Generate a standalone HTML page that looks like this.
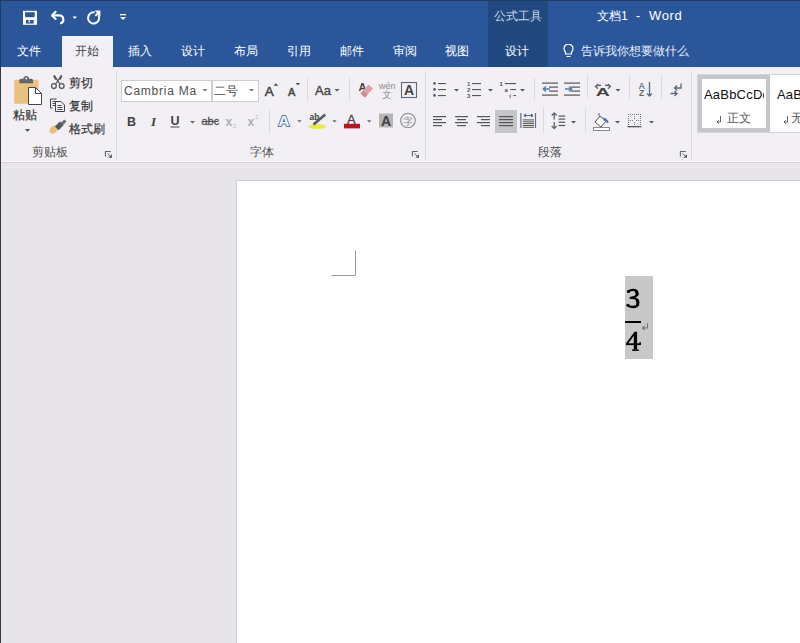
<!DOCTYPE html>
<html><head><meta charset="utf-8">
<style>
*{margin:0;padding:0;box-sizing:border-box}
html,body{width:800px;height:643px;overflow:hidden;background:#E7E4EA;font-family:"Liberation Sans",sans-serif}
.a{position:absolute}
#title{left:0;top:0;width:800px;height:67px;background:#2B579A}
#ctx{left:488px;top:0;width:60px;height:67px;background:#22497F}
.tab{position:absolute;top:43px;color:#fff;font-size:12px;line-height:16px;white-space:nowrap}
#ribbon{left:0;top:67px;width:800px;height:96px;background:#F3F0F5;border-bottom:1px solid #D6D2D8}
.t{position:absolute;color:#333;font-size:12px;line-height:14px;white-space:nowrap;-webkit-text-stroke:0.2px #333}
.gl{position:absolute;color:#505050;font-size:12px;line-height:14px;white-space:nowrap;margin-top:0.5px}
.sep{position:absolute;width:1px;background:#DADADA}
#page{left:236px;top:180px;width:564px;height:463px;background:#fff;border-left:1px solid #D0D0D0;border-top:1px solid #D0D0D0}
</style></head><body>
<div id="title" class="a"></div>
<div id="ctx" class="a"></div>
<div class="a" style="left:62px;top:36px;width:51px;height:31px;background:#F3F0F5"></div>
<!-- QAT -->
<svg class="a" style="left:0;top:0" width="140" height="36">
  <rect x="23" y="10.8" width="14" height="14" fill="#fff"/>
  <path d="M25 12.2 h9.8 v3.6 q0 1.5 -1.5 1.5 h-6.8 q-1.5 0 -1.5 -1.5z" fill="#2B579A"/>
  <rect x="26" y="20" width="7.7" height="3.6" fill="#2B579A"/>
  <rect x="28.5" y="20.4" width="1.6" height="2" fill="#fff"/>
  <path d="M52.5 15.4 h6.5 a4.1 4.1 0 0 1 2 7.8" fill="none" stroke="#fff" stroke-width="2.1" stroke-linecap="round"/>
  <path d="M55.6 11.8 l-3.6 3.6 l3.6 3.6" fill="none" stroke="#fff" stroke-width="2.1" stroke-linecap="round" stroke-linejoin="round"/>
  <path d="M72.5 16.5h4.5l-2.25 2.5z" fill="#fff"/>
  <path d="M98.45 15.1 A5.6 5.6 0 1 1 94.57 12.4" fill="none" stroke="#fff" stroke-width="2"/>
  <path d="M94.6 10.6 L100.4 10.6 L100.4 16.4z" fill="#fff"/>
  <path d="M95.3 15.8 L98.5 12.6" stroke="#fff" stroke-width="1.8"/>
  <rect x="120" y="14" width="6" height="1.3" fill="#fff"/>
  <path d="M120 17h6l-3 3z" fill="#fff"/>
</svg>

<div class="a" style="left:494px;top:8px;color:#CBD8EA;font-size:12px;line-height:16px">公式工具</div>
<div class="a" style="left:597px;top:8px;color:#fff;font-size:12px;line-height:16px;white-space:nowrap">文档1</div>
<div class="a" style="left:636px;top:8px;color:#fff;font-size:12px;line-height:16px;white-space:nowrap">-</div>
<div class="a" style="left:649px;top:8px;color:#fff;font-size:13px;line-height:16px;letter-spacing:0.6px;white-space:nowrap">Word</div>
<div class="tab" style="left:17px">文件</div>
<div class="tab" style="left:75px;color:#444">开始</div>
<div class="tab" style="left:128px">插入</div>
<div class="tab" style="left:181px">设计</div>
<div class="tab" style="left:234px">布局</div>
<div class="tab" style="left:287px">引用</div>
<div class="tab" style="left:340px">邮件</div>
<div class="tab" style="left:393px">审阅</div>
<div class="tab" style="left:445px">视图</div>
<div class="tab" style="left:505px">设计</div>
<svg class="a" style="left:562px;top:44px" width="14" height="14"><path d="M3.5 8 a4.5 4.5 0 1 1 6 0 v2 h-6z M4.5 12.5h4" fill="none" stroke="#fff" stroke-width="1.2"/></svg>
<div class="tab" style="left:581px;color:#E8EEF6">告诉我你想要做什么</div>

<div id="ribbon" class="a"></div>

<!-- clipboard group -->
<svg class="a" style="left:10px;top:72px" width="40" height="62">
  <rect x="4.2" y="7.7" width="24.3" height="24.1" rx="1" fill="#E8C27E"/>
  <path d="M9.3 11.2 v-2.6 q0 -1.8 1.8 -1.8 h10.2 q1.8 0 1.8 1.8 v2.6z" fill="#666"/>
  <circle cx="16.2" cy="6.6" r="2.7" fill="#666"/><circle cx="16.2" cy="6.4" r="1" fill="#F3F0F5"/>
  <path d="M18.5 15.5 h7 l6 6 v11 h-13z" fill="#fff" stroke="#444" stroke-width="1"/>
  <path d="M25.5 15.5 v6 h6" fill="none" stroke="#444" stroke-width="1"/>
  <path d="M15 57h5l-2.5 3z" fill="#555"/>
</svg>
<div class="t" style="left:13px;top:108px;font-size:12px">粘贴</div>
<svg class="a" style="left:48px;top:72px" width="20" height="64">
  <g fill="none" stroke="#555">
    <circle cx="5.9" cy="14.1" r="2.4" stroke-width="1.3"/><circle cx="13.7" cy="14.1" r="2.4" stroke-width="1.3"/>
    <path d="M7.6 12 L13.6 3.3 M12 12 L6 3.3" stroke-width="1.3"/>
    <path d="M11.5 7.5 L13.6 3.6 M8 7.5 L6 3.6" stroke-width="2"/>
  </g>
  <g fill="none" stroke="#444" stroke-width="1">
    <path d="M8.5 27 h-6 v9 h2"/>
    <path d="M4.5 29.5 h3 M4.5 31.5 h3 M4.5 33.5 h3"/>
    <path d="M7.5 29.5 h5.5 l3.5 3.5 v6.5 h-9z" fill="#F2F0F4"/>
    <path d="M9.5 33.5 h4 M9.5 35.5 h5 M9.5 37.5 h5"/>
  </g>
  <ellipse cx="0" cy="0" rx="4.6" ry="3.4" fill="#E6C27A" transform="translate(5.6,57.6) rotate(-45)"/>
  <rect x="-3.5" y="-2.6" width="7" height="5.2" fill="#585858" transform="translate(11.2,53.9) rotate(-45)"/>
  <rect x="-2.6" y="-1.5" width="5.2" height="3" fill="#6A6A6A" transform="translate(15.6,50.3) rotate(-45)"/>
</svg>
<div class="t" style="left:69px;top:75.5px">剪切</div>
<div class="t" style="left:69px;top:98.5px">复制</div>
<div class="t" style="left:69px;top:121.5px">格式刷</div>
<div class="gl" style="left:32px;top:144px">剪贴板</div>
<svg class="a" style="left:104px;top:150px" width="10" height="10"><path d="M1.4 6.5 v-5 h5.4" fill="none" stroke="#666" stroke-width="1.1"/><path d="M3.6 3.4 l3.4 3.4" stroke="#555" stroke-width="1"/><path d="M8 4.2 v3.6 h-3.6z" fill="#555"/></svg>
<div class="sep" style="left:116px;top:71px;height:89px"></div>

<!-- font group -->
<div class="a" style="left:121px;top:80px;width:91px;height:22px;background:#fff;border:1px solid #CFCDD1"></div>
<div class="a" style="left:212px;top:80px;width:47px;height:22px;background:#fff;border:1px solid #CFCDD1"></div>
<div class="t" style="left:124px;top:83px;font-size:12px;line-height:16px;letter-spacing:0.75px;color:#505050;width:73px;overflow:hidden;-webkit-text-stroke:0">Cambria Math</div>
<div class="t" style="left:214px;top:83px;font-size:12px;line-height:16px;color:#444;-webkit-text-stroke:0">二号</div>
<svg class="a" style="left:0;top:0" width="430" height="140">
  <path d="M202.5 89h5l-2.5 2.5z M249 89h5l-2.5 2.5z" fill="#777"/>
  <!-- grow / shrink -->
  <text x="264.8" y="95.7" font-family="Liberation Sans" font-size="13.5" fill="#444" stroke="#444" stroke-width="0.5">A</text>
  <path d="M273.6 85.8 l2.3 -2.5 l2.3 2.5z" fill="#444"/>
  <text x="288" y="95.7" font-family="Liberation Sans" font-size="11" fill="#444" stroke="#444" stroke-width="0.5">A</text>
  <path d="M295.6 83h4.6l-2.3 2.3z" fill="#444"/>
  <!-- Aa -->
  <text x="315" y="94.5" font-family="Liberation Sans" font-size="13" fill="#444" stroke="#444" stroke-width="0.35">Aa</text>
  <path d="M334.5 89h5l-2.5 2.5z" fill="#555"/>
  <!-- clear formatting -->
  <text x="358.5" y="91" font-family="Liberation Sans" font-size="11" font-weight="bold" fill="#444">A</text>
  <path d="M360.5 93.5 l8 -9 l4.5 4 l-8 9z" fill="#E0A0A8"/><path d="M360.5 93.5 l2.5 -2.8 l4.5 4 l-2.5 2.8z" fill="#D08890"/>
  <!-- wen -->
  <text x="379" y="88.5" font-family="Liberation Sans" font-size="9" fill="#8A8A8A">wén</text>
  <text x="381.5" y="97.5" font-size="10" fill="#8A8A8A">文</text>
  <!-- border A -->
  <rect x="401.5" y="82.5" width="15" height="15" fill="none" stroke="#5C6B7A" stroke-width="1.1"/>
  <text x="404" y="95" font-family="Liberation Sans" font-size="14" font-weight="bold" fill="#444">A</text>
  <!-- row 2 -->
  <text x="127" y="125.5" font-family="Liberation Sans" font-size="12.5" font-weight="bold" fill="#444">B</text>
  <text x="151" y="125.5" font-family="Liberation Serif" font-size="13" font-style="italic" font-weight="bold" fill="#444">I</text>
  <text x="170.5" y="125" font-family="Liberation Sans" font-size="12.5" font-weight="bold" fill="#444">U</text>
  <rect x="170.5" y="126.5" width="9" height="1" fill="#444"/>
  <path d="M190 121h5l-2.5 2.5z" fill="#666"/>
  <text x="201.5" y="125" font-family="Liberation Sans" font-size="11" fill="#555" stroke="#555" stroke-width="0.3">abc</text>
  <rect x="201.5" y="121" width="17" height="1" fill="#555"/>
  <text x="225.5" y="125.5" font-family="Liberation Sans" font-size="12" font-weight="bold" fill="#B0B0B0">x</text>
  <text x="233" y="128" font-family="Liberation Sans" font-size="6" fill="#B8B8B8">2</text>
  <text x="247.5" y="125.5" font-family="Liberation Sans" font-size="12" font-weight="bold" fill="#B0B0B0">x</text>
  <text x="255" y="119" font-family="Liberation Sans" font-size="6" fill="#B8B8B8">2</text>
  <!-- text effects -->
  <text x="278.3" y="126.3" font-family="Liberation Sans" font-size="15.5" font-weight="bold" fill="#EEF4FA" stroke="#56789C" stroke-width="2" paint-order="stroke" stroke-linejoin="round">A</text>
  <path d="M297.3 120.3h4.4l-2.2 2.2z" fill="#666"/>
  <!-- highlight -->
  <ellipse cx="317.2" cy="126.5" rx="8.8" ry="2.6" fill="#E6EE3A"/>
  <text x="309.5" y="120" font-family="Liberation Sans" font-size="8.5" font-weight="bold" fill="#444">ab</text>
  <path d="M313.5 124.5 L325.3 114.5" stroke="#555B66" stroke-width="2.6"/>
  <path d="M332.3 120.3h4.4l-2.2 2.2z" fill="#666"/>
  <!-- font color -->
  <text x="347" y="124.3" font-family="Liberation Sans" font-size="13" fill="#444" stroke="#444" stroke-width="0.3">A</text>
  <rect x="344" y="123.8" width="16" height="4.6" fill="#C0141C"/>
  <path d="M367 120.3h4.4l-2.2 2.2z" fill="#666"/>
  <!-- shading -->
  <rect x="379" y="113.5" width="14" height="14" fill="#B6B6B6"/>
  <text x="381" y="126" font-family="Liberation Sans" font-size="14" font-weight="bold" fill="#404040">A</text>
  <!-- enclose char -->
  <circle cx="408" cy="120.5" r="7.3" fill="none" stroke="#8C8C8C" stroke-width="1.1"/>
  <text x="403" y="124.5" font-size="10" fill="#888">字</text>
</svg>
<div class="sep" style="left:307px;top:78px;height:23px"></div>
<div class="sep" style="left:349px;top:78px;height:23px"></div>
<div class="sep" style="left:269px;top:110px;height:24px"></div>
<div class="gl" style="left:250px;top:144px">字体</div>
<svg class="a" style="left:411px;top:150px" width="10" height="10"><path d="M1.4 6.5 v-5 h5.4" fill="none" stroke="#666" stroke-width="1.1"/><path d="M3.6 3.4 l3.4 3.4" stroke="#555" stroke-width="1"/><path d="M8 4.2 v3.6 h-3.6z" fill="#555"/></svg>
<div class="sep" style="left:425px;top:71px;height:89px"></div>

<!-- paragraph group -->
<svg class="a" style="left:425px;top:70px" width="270" height="70">
 <g fill="#555">
  <!-- bullets -->
  <circle cx="9.5" cy="13.4" r="1.3" fill="#4A5A6E"/><circle cx="9.5" cy="19.4" r="1.3" fill="#4A5A6E"/><circle cx="9.5" cy="25.4" r="1.3" fill="#4A5A6E"/>
  <rect x="13" y="13" width="8" height="1.1"/><rect x="13" y="19" width="8" height="1.1"/><rect x="13" y="25" width="8" height="1.1"/>
  <path d="M29 19h5l-2.5 2.5z"/>
  <!-- numbering -->
  <text x="42" y="15.8" font-family="Liberation Sans" font-size="6" font-weight="bold">1</text>
  <text x="42" y="21.8" font-family="Liberation Sans" font-size="6" font-weight="bold">2</text>
  <text x="42" y="27.8" font-family="Liberation Sans" font-size="6" font-weight="bold">3</text>
  <rect x="47" y="13" width="9" height="1.1"/><rect x="47" y="19" width="9" height="1.1"/><rect x="47" y="25" width="9" height="1.1"/>
  <path d="M63 19h5l-2.5 2.5z"/>
  <!-- multilevel -->
  <text x="74.5" y="15.5" font-family="Liberation Sans" font-size="6" font-weight="bold">1</text>
  <text x="79.5" y="21.5" font-family="Liberation Sans" font-size="6" font-weight="bold">a</text>
  <text x="84.3" y="27.5" font-family="Liberation Sans" font-size="6" font-weight="bold">i</text>
  <rect x="80" y="13" width="11" height="1.1"/><rect x="85.3" y="19" width="5.7" height="1.1"/><rect x="88.5" y="25" width="2.5" height="1.1"/>
  <path d="M95 19h5l-2.5 2.5z"/>
  <!-- decrease indent -->
  <rect x="117" y="12.5" width="16" height="1.2"/><rect x="124" y="16.5" width="9" height="1.2"/><rect x="124" y="20.5" width="9" height="1.2"/><rect x="117" y="24.5" width="16" height="1.2"/>
  <!-- increase indent -->
  <rect x="139" y="12.5" width="16" height="1.2"/><rect x="146" y="16.5" width="9" height="1.2"/><rect x="146" y="20.5" width="9" height="1.2"/><rect x="139" y="24.5" width="16" height="1.2"/>
  <!-- asian layout -->
  <text x="0" y="0" font-family="Liberation Sans" font-size="15" font-weight="bold" fill="#444" transform="translate(170.8,25.6) scale(1.3,0.72)">A</text>
  <path d="M190.5 19h5l-2.5 2.5z"/>
  <!-- sort -->
  <text x="213.5" y="18.5" font-family="Liberation Sans" font-size="9" font-weight="bold" fill="#6A7E90">A</text>
  <text x="214" y="26" font-family="Liberation Sans" font-size="8.5" font-weight="bold" fill="#666">Z</text>
  <!-- row2 align -->
  <rect x="8" y="46" width="13" height="1.2"/><rect x="8" y="49" width="9" height="1.2"/><rect x="8" y="52" width="13" height="1.2"/><rect x="8" y="55" width="9" height="1.2"/>
  <rect x="30" y="46" width="13" height="1.2"/><rect x="32" y="49" width="9" height="1.2"/><rect x="30" y="52" width="13" height="1.2"/><rect x="32" y="55" width="9" height="1.2"/>
  <rect x="52" y="46" width="13" height="1.2"/><rect x="56" y="49" width="9" height="1.2"/><rect x="52" y="52" width="13" height="1.2"/><rect x="56" y="55" width="9" height="1.2"/>
 </g>
 <rect x="70" y="40" width="22" height="23" fill="#C5C4C8"/>
 <g fill="#555">
  <rect x="74" y="46" width="14" height="1.2"/><rect x="74" y="49" width="14" height="1.2"/><rect x="74" y="52" width="14" height="1.2"/><rect x="74" y="55" width="14" height="1.2"/>
 </g>
 <g fill="none" stroke="#5A7185" stroke-width="1.2">
  <!-- distributed -->
  <path d="M95.9 43 v15 M110.5 43 v15"/>
  <path d="M99 45.5 h9 M99 45.5 l2 -1.5 M99 45.5 l2 1.5 M108 45.5 l-2 -1.5 M108 45.5 l-2 1.5"/>
 </g>
 <g fill="#555">
  <rect x="97.8" y="49.4" width="11.2" height="1"/><rect x="97.8" y="51.3" width="11.2" height="1"/><rect x="97.8" y="53.1" width="11.2" height="1"/><rect x="97.8" y="55" width="11.2" height="1"/><rect x="97.8" y="56.8" width="11.2" height="1"/>
 </g>
 <g fill="none" stroke="#4F7FAA" stroke-width="1.5">
  <path d="M118 19 h7 M118 19 l3 -2.5 M118 19 l3 2.5"/>
  <path d="M147 19 h-7 M147 19 l-3 -2.5 M147 19 l-3 2.5"/>
 </g>
 <g fill="none" stroke="#5A6A7A" stroke-width="1.3">
  <!-- asian layout arrows -->
  <path d="M170.5 16.5 q2.5 -1.5 5.5 -1.2 M173 14 l-2.5 2.5 l2.5 2.2 M185.5 16.5 q-2.5 -1.5 -5.5 -1.2 M183 14 l2.5 2.5 l-2.5 2.2"/>
  <!-- sort arrow -->
  <path d="M224.5 12 v14 M222 23.5 l2.5 2.5 l2.5 -2.5"/>
  <!-- show/hide -->
  <path d="M256 13.5 v4.5 h-6.5 M252 15.5 l-2.5 2.5 l2.5 2.5"/>
  <path d="M245.5 23.5 h6.5 M249.5 21 l2.5 2.5 l-2.5 2.5"/>
  <!-- line spacing -->
  <path d="M129.2 43 v6.5 M126.7 45.5 l2.5 -2.5 l2.5 2.5 M129.2 52 v6.5 M126.7 56 l2.5 2.5 l2.5 -2.5"/>
 </g>
 <g fill="#555">
  <rect x="133.6" y="45.5" width="6.6" height="1.2"/><rect x="133.6" y="48.5" width="6.6" height="1.2"/><rect x="133.6" y="51.6" width="6.6" height="1.2"/><rect x="133.6" y="54.9" width="6.6" height="1.2"/>
  <path d="M146 51h5l-2.5 2.5z"/>
  <path d="M190 51h5l-2.5 2.5z"/>
  <path d="M224 51h5l-2.5 2.5z"/>
 </g>
 <!-- shading bucket -->
 <path d="M170 52 l5 -6 l6 5 l-5 6z" fill="#fff" stroke="#555" stroke-width="1"/>
 <path d="M174 46 v-3" stroke="#555" stroke-width="1"/>
 <path d="M178.5 47.5 q3.5 0.5 4.8 3.5 q0.6 1.8 -0.8 2.6 q-0.6 -2.2 -4.5 -3.6z" fill="#4F7AA5"/>
 <rect x="168.5" y="57.5" width="16" height="3" fill="#fff" stroke="#888" stroke-width="1"/>
 <!-- borders -->
 <g fill="#777">
  <rect x="203" y="44" width="1" height="1"/><rect x="205" y="44" width="1" height="1"/><rect x="207" y="44" width="1" height="1"/><rect x="209" y="44" width="1" height="1"/><rect x="211" y="44" width="1" height="1"/><rect x="213" y="44" width="1" height="1"/><rect x="215" y="44" width="1" height="1"/>
  <rect x="203" y="46" width="1" height="1"/><rect x="203" y="48" width="1" height="1"/><rect x="203" y="50" width="1" height="1"/><rect x="203" y="52" width="1" height="1"/><rect x="203" y="54" width="1" height="1"/>
  <rect x="209" y="46" width="1" height="1"/><rect x="209" y="48" width="1" height="1"/><rect x="209" y="52" width="1" height="1"/><rect x="209" y="54" width="1" height="1"/>
  <rect x="215" y="46" width="1" height="1"/><rect x="215" y="48" width="1" height="1"/><rect x="215" y="50" width="1" height="1"/><rect x="215" y="52" width="1" height="1"/><rect x="215" y="54" width="1" height="1"/>
  <rect x="205" y="50" width="1" height="1"/><rect x="207" y="50" width="1" height="1"/><rect x="211" y="50" width="1" height="1"/><rect x="213" y="50" width="1" height="1"/>
 </g>
 <rect x="202.5" y="56" width="14" height="1.3" fill="#555"/>
</svg>
<div class="sep" style="left:534px;top:78px;height:22px"></div>
<div class="sep" style="left:587px;top:76px;height:23px"></div>
<div class="sep" style="left:629px;top:76px;height:23px"></div>
<div class="sep" style="left:661px;top:76px;height:23px"></div>
<div class="sep" style="left:543px;top:108px;height:24px"></div>
<div class="sep" style="left:585px;top:108px;height:24px"></div>
<div class="gl" style="left:538px;top:144px">段落</div>
<svg class="a" style="left:679px;top:150px" width="10" height="10"><path d="M1.4 6.5 v-5 h5.4" fill="none" stroke="#666" stroke-width="1.1"/><path d="M3.6 3.4 l3.4 3.4" stroke="#555" stroke-width="1"/><path d="M8 4.2 v3.6 h-3.6z" fill="#555"/></svg>
<div class="sep" style="left:691px;top:71px;height:89px"></div>
<!-- styles gallery -->
<div class="a" style="left:697px;top:74px;width:110px;height:59px;border:1px solid #D6D4D8;background:#fff"></div>
<div class="a" style="left:698px;top:75px;width:72px;height:57px;border:4px solid #C6C5C9;background:#fff"></div>
<div class="a" style="left:704px;top:87px;width:60px;overflow:hidden;white-space:nowrap;font-size:13px;line-height:16px;color:#111;letter-spacing:0.2px">AaBbCcDd</div>
<svg class="a" style="left:714px;top:114px" width="10" height="12"><path d="M6.5 2 v6 h-3.5 M4.8 6.2 l-1.8 1.8 l1.8 1.8" fill="none" stroke="#666" stroke-width="1"/></svg>
<div class="a" style="left:727px;top:110px;font-size:12px;line-height:16px;color:#555;white-space:nowrap">正文</div>
<div class="a" style="left:777px;top:87px;font-size:13px;line-height:16px;color:#111;white-space:nowrap;letter-spacing:0.2px">AaBbC</div>
<svg class="a" style="left:781px;top:114px" width="10" height="12"><path d="M6.5 2 v6 h-3.5 M4.8 6.2 l-1.8 1.8 l1.8 1.8" fill="none" stroke="#666" stroke-width="1"/></svg>
<div class="a" style="left:791px;top:110px;font-size:12px;line-height:16px;color:#555;white-space:nowrap">无</div>
<div class="a" style="left:0;top:161px;width:800px;height:1px;background:#F8F6FA"></div>
<div class="a" style="left:0;top:163px;width:800px;height:5px;background:#E9E6EB;border-bottom:1px solid #EEEBF0"></div>
<div id="page" class="a"></div>

<!-- doc content -->
<svg class="a" style="left:320px;top:245px" width="40" height="35"><path d="M35.5 5.5 v25 h-24" fill="none" stroke="#999" stroke-width="1"/></svg>
<div class="a" style="left:625px;top:276px;width:28px;height:83px;background:#C8C8C8"></div>
<svg class="a" style="left:620px;top:280px" width="30" height="80"><g transform="translate(-620,-280)">
 <g fill="none" stroke="#000" stroke-linecap="round">
  <path d="M628.4 291.2 Q631 289.6 633.8 289.8 Q637.4 290.1 637.2 293.6 Q636.9 297.2 630.6 297.9" stroke-width="2.3"/>
  <path d="M636.2 291.2 Q637.4 292.5 637.1 294.5" stroke-width="3.1"/>
  <path d="M631.6 297.9 Q638.4 298.4 638.1 302.6 Q637.9 307 633 307 Q629.2 307 627.6 305.3" stroke-width="2.3"/>
  <path d="M637.4 300.5 Q638.4 302.5 637.6 305" stroke-width="3.1"/>
 </g>
 <circle cx="628.5" cy="291.5" r="1.5" fill="#000"/>
 <circle cx="628" cy="305.2" r="1.5" fill="#000"/>
 <path d="M635.3 332.2 L626.8 343.9" stroke="#000" stroke-width="1.8" fill="none"/>
 <g fill="#000">
  <path d="M633.8 333.5 L635.1 331.8 H637.1 V349.8 H633.8z"/>
  <rect x="626" y="343.3" width="14.6" height="1.8"/>
  <rect x="639.5" y="342" width="1.3" height="3"/>
  <rect x="632.1" y="349.4" width="6.8" height="1.5"/>
 </g>
</g></svg>
<div class="a" style="left:625px;top:321px;width:16px;height:2px;background:#000"></div>

<svg class="a" style="left:640px;top:321.5px" width="10" height="12"><path d="M7.5 1 v5 h-5 M4.5 4 l-2 2 l2 2" fill="none" stroke="#777" stroke-width="1.1"/></svg>
<div class="a" style="left:0;top:0;width:800px;height:1px;background:#1D3B66"></div>
<div class="a" style="left:0;top:0;width:1px;height:67px;background:#1D3B66"></div>
<div class="a" style="left:0;top:67px;width:1px;height:576px;background:#3A3A3A"></div>
</body></html>
